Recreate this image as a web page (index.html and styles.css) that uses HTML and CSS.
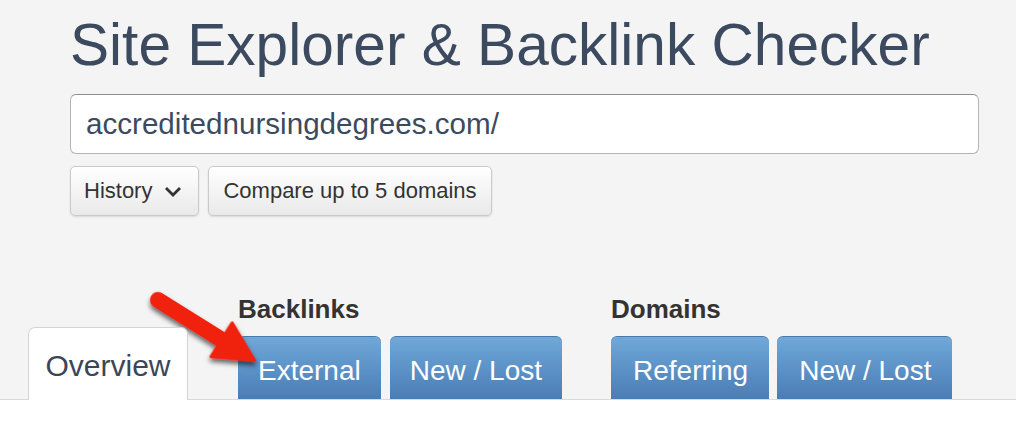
FILE: index.html
```html
<!DOCTYPE html>
<html lang="en">
<head>
  <meta charset="UTF-8">
  <title>Site Explorer &amp; Backlink Checker</title>
  <link rel="stylesheet" href="styles.css">
</head>
<body>
  <div class="search">
    <h1>Site Explorer &amp; Backlink Checker</h1>
    <input class="url-input" type="text" value="accreditednursingdegrees.com/">
    <div class="actions">
      <button class="btn btn-history">History
        <svg class="chevron" width="18" height="11" viewBox="0 0 18 11"><polyline points="2,2 9,9 16,2" fill="none" stroke="#333" stroke-width="2.8"/></svg>
      </button>
      <button class="btn">Compare up to 5 domains</button>
    </div>
  </div>

  <div class="tabs">
    <div class="tab-overview">Overview</div>
    <div class="tab-group">
      <div class="group-label">Backlinks</div>
      <div class="group-tabs">
        <div class="tab-blue">External</div>
        <div class="tab-blue">New / Lost</div>
      </div>
    </div>
    <div class="tab-group domains">
      <div class="group-label">Domains</div>
      <div class="group-tabs">
        <div class="tab-blue">Referring</div>
        <div class="tab-blue">New / Lost</div>
      </div>
    </div>
  </div>
  <div class="content"></div>

  <!-- annotation arrow -->
  <svg class="arrow" width="1016" height="433" viewBox="0 0 1016 433">
    <defs>
      <filter id="shadow" x="-30%" y="-30%" width="160%" height="160%">
        <feDropShadow dx="2" dy="3" stdDeviation="2.5" flood-color="#000" flood-opacity="0.6"/>
      </filter>
    </defs>
    <g transform="translate(158 300) rotate(32)" filter="url(#shadow)">
      <line x1="0" y1="0" x2="80" y2="0" stroke="#f0220e" stroke-width="16" stroke-linecap="round"/>
      <polygon points="75,-20 114,0 75,20" fill="#f0220e" stroke="#f0220e" stroke-width="3" stroke-linejoin="round"/>
    </g>
  </svg>
</body>
</html>
```

FILE: styles.css
```css
body {
  margin: 0;
  background: #f4f4f4;
  font-family: "Liberation Sans", Arial, sans-serif;
  height: 433px;
  overflow: hidden;
  position: relative;
}

.search {
  padding: 12px 0 0 70px;
}

h1 {
  margin: 0;
  font-size: 58.6px;
  line-height: 66px;
  font-weight: normal;
  color: #3c4a60;
}

.url-input {
  display: block;
  box-sizing: border-box;
  margin-top: 16px;
  width: 909px;
  height: 60px;
  padding: 0 15px;
  font-family: inherit;
  font-size: 29.6px;
  color: #3c4a60;
  background: #fff;
  border: 1px solid #b4b4b4;
  border-top-color: #8e8e8e;
  border-radius: 6px;
  outline: none;
}

.actions {
  display: flex;
  gap: 9px;
  margin-top: 12px;
}

.btn {
  display: flex;
  align-items: center;
  box-sizing: border-box;
  height: 50px;
  padding: 0 14px;
  font-family: inherit;
  font-size: 22px;
  color: #333;
  background: linear-gradient(#ffffff, #e9e9e9);
  border: 1px solid #cacaca;
  border-radius: 5px;
  box-shadow: 0 1px 2px rgba(0, 0, 0, 0.12);
}

.btn-history {
  padding: 0 16px 0 13px;
}

.chevron {
  margin-left: 12px;
}

.tabs {
  display: flex;
  align-items: flex-end;
  padding-left: 28px;
  margin-top: 78px;
}

.tab-overview {
  box-sizing: border-box;
  width: 160px;
  height: 73px;
  margin-bottom: -1px;
  padding-top: 21px;
  text-align: center;
  font-size: 30px;
  line-height: 34px;
  color: #3b4657;
  background: #fff;
  border: 1px solid #d4d4d4;
  border-bottom: none;
  border-radius: 7px 7px 0 0;
  position: relative;
  z-index: 1;
}

.tab-group {
  margin-left: 50px;
}

.tab-group.domains {
  margin-left: 49px;
}

.group-label {
  font-size: 26px;
  font-weight: bold;
  line-height: 30px;
  color: #333;
  margin-bottom: 12px;
}

.group-tabs {
  display: flex;
  gap: 9px;
}

.domains .group-tabs {
  gap: 8px;
}

.tab-blue {
  box-sizing: border-box;
  height: 63px;
  padding: 18px 20px 0;
  font-size: 28px;
  line-height: 32px;
  color: #fff;
  background: linear-gradient(#6fa8d9, #4a7db5);
  border-top: 1px solid #4a7aac;
  border-radius: 6px 6px 0 0;
}

.domains .tab-blue {
  padding: 18px 21px 0 22px;
}

.content {
  height: 40px;
  background: #fff;
  border-top: 1px solid #dadada;
}

.arrow {
  position: absolute;
  left: 0;
  top: 0;
  pointer-events: none;
}
```
